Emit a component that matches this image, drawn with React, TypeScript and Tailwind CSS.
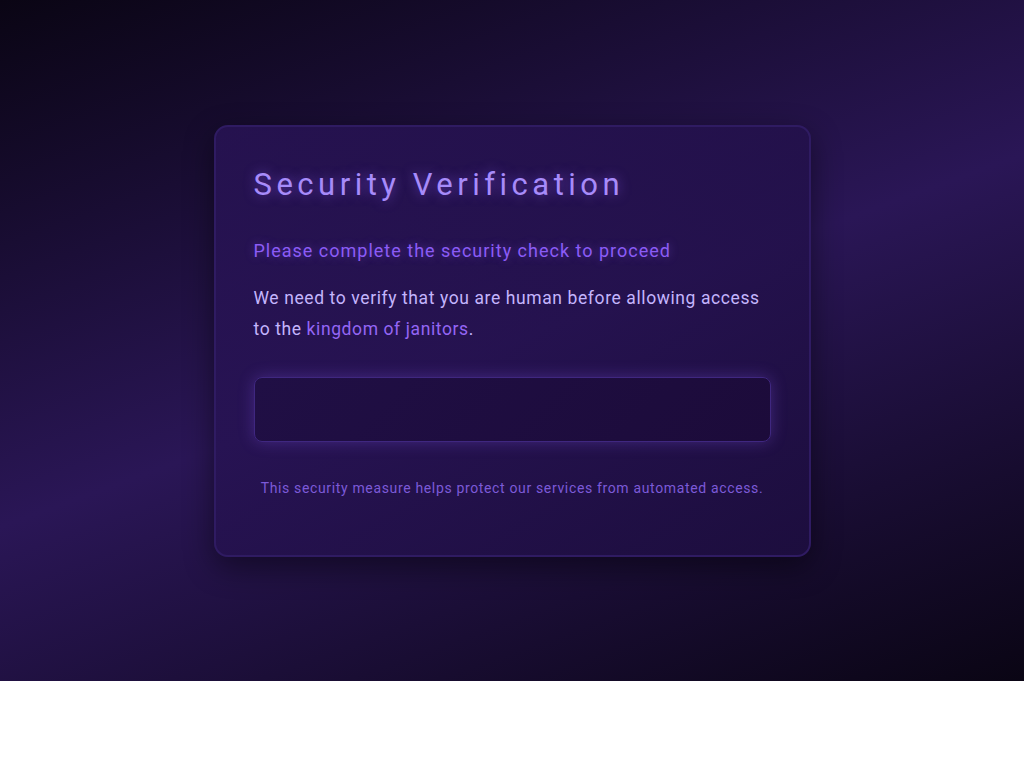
export default function App() {
  return (
    <div className="flex h-[681px] w-full items-center justify-center bg-[linear-gradient(160deg,#0a0514_0%,#2a1656_50%,#0a0514_100%)] font-['Roboto',sans-serif]">
      <div className="w-[597px] rounded-[14px] border-2 border-[#2f1b62] bg-[linear-gradient(135deg,rgba(42,20,90,0.75),rgba(30,14,66,0.8))] px-[38px] pt-[40px] pb-[57px] shadow-[0_10px_30px_rgba(0,0,0,0.45)]">
        <h1 className="text-[31px] leading-[36px] tracking-[4.5px] text-[#a78bfa] [text-shadow:0_0_12px_rgba(139,92,246,0.6)]">
          Security Verification
        </h1>
        <p className="mt-[36px] text-[18px] leading-[24px] tracking-[1px] text-[#8b5cf6] [text-shadow:0_0_10px_rgba(139,92,246,0.45)]">
          Please complete the security check to proceed
        </p>
        <p className="mt-[20px] text-[17.5px] leading-[31px] tracking-[0.6px] text-[#c4b5fd]">
          We need to verify that you are human before allowing access to the{" "}
          <a href="#" className="text-[#9466f5]">kingdom of janitors</a>.
        </p>
        <div className="mt-[32px] h-[65px] rounded-[8px] border border-[#3f2780] bg-[linear-gradient(135deg,#200f45,#1c0b3a)] shadow-[0_0_16px_rgba(139,92,246,0.3)]"></div>
        <p className="mt-[36px] text-center text-[14px] leading-[20px] tracking-[0.65px] text-[#7c5ad8]">
          This security measure helps protect our services from automated access.
        </p>
      </div>
    </div>
  );
}
